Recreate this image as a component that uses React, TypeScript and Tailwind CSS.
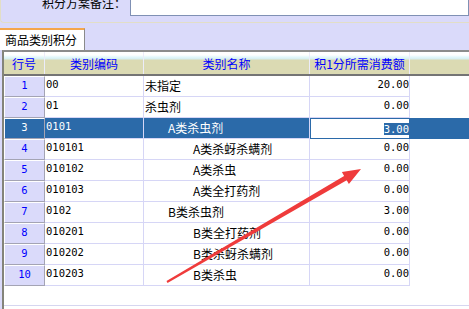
import React from "react";

type Row = { no: number; code: string; name: string; level: number; amount: string };

const ROWS: Row[] = [
  { no: 1, code: "00", name: "未指定", level: 1, amount: "20.00" },
  { no: 2, code: "01", name: "杀虫剂", level: 1, amount: "0.00" },
  { no: 3, code: "0101", name: "A类杀虫剂", level: 2, amount: "3.00" },
  { no: 4, code: "010101", name: "A类杀蚜杀螨剂", level: 3, amount: "0.00" },
  { no: 5, code: "010102", name: "A类杀虫", level: 3, amount: "0.00" },
  { no: 6, code: "010103", name: "A类全打药剂", level: 3, amount: "0.00" },
  { no: 7, code: "0102", name: "B类杀虫剂", level: 2, amount: "3.00" },
  { no: 8, code: "010201", name: "B类全打药剂", level: 3, amount: "0.00" },
  { no: 9, code: "010202", name: "B类杀蚜杀螨剂", level: 3, amount: "0.00" },
  { no: 10, code: "010203", name: "B类杀虫", level: 3, amount: "0.00" },
];

const SELECTED = 3;
const MONO = "font-['DejaVu_Sans_Mono',monospace] text-[10.5px]";

const indent = (level: number) =>
  level === 1 ? "pl-[1px]" : level === 2 ? "pl-[24px]" : "pl-[49px]";

const GridRow: React.FC<{ row: Row }> = ({ row }) => {
  const sel = row.no === SELECTED;
  return (
    <div className={`flex h-[21px] ${sel ? "bg-[#2b6aa9] text-white" : "text-black"}`}>
      <div
        className={`w-[41px] flex items-center justify-center pb-[2px] border-l border-t border-white border-r border-r-[#a4a4b4] border-b border-b-[#a4a4b4] ${MONO} ${
          sel ? "bg-[#2b6aa9] text-white" : "bg-[#dadafa] text-[#0000ff]"
        }`}
      >
        {row.no}
      </div>
      <div className={`w-[99px] flex items-center pl-[1px] pb-[2px] border-r border-b border-[#d6d6f6] ${MONO}`}>
        {row.code}
      </div>
      <div
        className={`w-[166px] flex items-center pb-[1px] border-r border-b border-[#d6d6f6] text-[12px] leading-[17px] ${indent(
          row.level
        )}`}
      >
        {row.name}
      </div>
      {sel ? (
        <div className="w-[100px] flex items-center justify-end bg-white border border-[#2b6aa9] pr-0">
          <span className={`bg-[#2b6aa9] text-white leading-[12px] ${MONO}`}>{row.amount}</span>
        </div>
      ) : (
        <div className={`w-[100px] flex items-center justify-end pb-[2px] border-r border-b border-[#d6d6f6] ${MONO}`}>
          {row.amount}
        </div>
      )}
    </div>
  );
};

const HeadCell: React.FC<{ w: string; children: React.ReactNode }> = ({ w, children }) => (
  <div className={`${w} flex items-center justify-center border-r border-[#ececfa] text-[#0000ff] text-[12px] leading-[17px]`}>
    {children}
  </div>
);

const App: React.FC = () => {
  return (
    <div className="relative w-[469px] h-[309px] overflow-hidden bg-[#dadafa] flex flex-col font-['Noto_Sans_CJK_SC','Noto_Sans',sans-serif]">
      {/* remark panel */}
      <div className="h-[23px] shrink-0 border-l border-b border-[#e2dec6] rounded-bl-[4px] overflow-hidden">
        <div className="flex -mt-[8px]">
          <span className="ml-[41px] w-[85px] mt-[2px] text-[12px] leading-[17px] text-black">积分方案备注：</span>
          <div className="ml-[3px] flex-1 h-[24px] bg-white border border-[#7f90b4]" />
        </div>
      </div>

      {/* tab strip */}
      <div className="mt-[5px] h-[22px] shrink-0 flex">
        <div className="w-[85px] h-full bg-white border-t-2 border-[#f4a64c] border-r border-r-[#8a8a8a] pl-[5px] pt-[1px] text-[12px] leading-[17px] text-black">
          商品类别积分
        </div>
      </div>

      {/* grid */}
      <div className="flex-1 ml-[2px] border-l-2 border-[#84847a] border-t-2 border-t-[#8c8c8c] bg-white flex flex-col">
        <div className="h-[24px] shrink-0 flex border-b-2 border-[#747474] bg-[linear-gradient(to_bottom,#ffffff_0px,#ffffff_3px,#e4f8fc_5px,#d6eef0_7px,#dbdab3_8px,#dbdab3_100%)]">
          <HeadCell w="w-[41px]">行号</HeadCell>
          <HeadCell w="w-[99px]">类别编码</HeadCell>
          <HeadCell w="w-[166px]">类别名称</HeadCell>
          <HeadCell w="w-[100px]">积1分所需消费额</HeadCell>
        </div>
        {ROWS.map((r) => (
          <GridRow key={r.no} row={r} />
        ))}
        <div className="h-[19px] shrink-0" />
        <div className="h-px shrink-0 bg-[#d6d6f0]" />
      </div>

      {/* annotation arrow */}
      <svg className="absolute left-0 top-0 pointer-events-none" width="469" height="309" viewBox="0 0 469 309">
        <polygon
          fill="#ef3b3b"
          points="166.5,281.1 344.1,175.9 341.9,172.1 361,169 348.9,184.1 346.7,180.3 167.5,282.9"
        />
      </svg>
    </div>
  );
};

export default App;
